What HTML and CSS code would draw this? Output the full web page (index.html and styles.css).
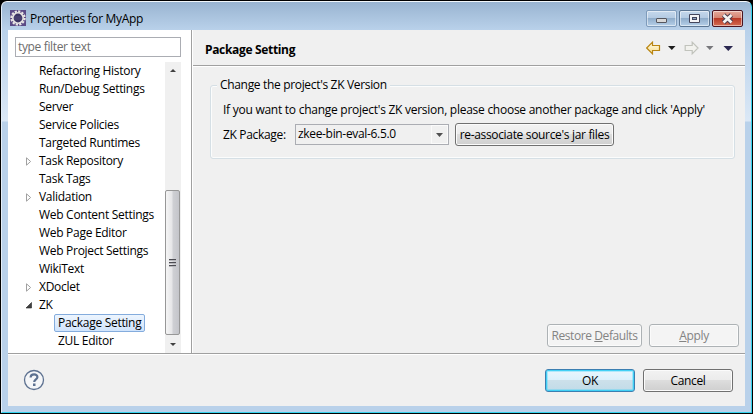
FILE: index.html
```html
<!DOCTYPE html>
<html lang="en">
<head>
<meta charset="utf-8">
<title>Properties for MyApp</title>
<link rel="stylesheet" href="styles.css">
</head>
<body>
<div class="window">
  <header class="titlebar">
    <svg class="app-icon" width="16" height="16" viewBox="0 0 16 16">
      <rect width="16" height="16" fill="#5b4a86"/>
      <circle cx="8" cy="8" r="6.6" fill="none" stroke="#e9e6e4" stroke-width="2.2" stroke-dasharray="2.2 1.25"/>
      <circle cx="8" cy="8" r="5.2" fill="#3b3262" stroke="#e9e6e4" stroke-width="1.6"/>
      <path d="M4 7h8M4 9h8" stroke="#5b5484" stroke-width=".8"/>
    </svg>
    <h1 class="window-title">Properties for MyApp</h1>
    <div class="controls">
      <span class="control control-min"><svg width="31" height="17"><rect x="10.5" y="8.5" width="10" height="4" rx=".5" fill="#d8d8d8" stroke="#55565e"/></svg></span>
      <span class="control control-max"><svg width="31" height="17"><path d="M10.500 4.500h10v8h-10z" fill="#f4f4f6" stroke="#44465c"/><rect x="13.500" y="7.500" width="4" height="2" fill="#8fa6c4" stroke="#44465c"/></svg></span>
      <span class="control control-close"><svg width="31" height="17"><path d="M11.500 5l8 7.500M19.500 5l-8 7.500" stroke="#4b3b4c" stroke-width="4.600"/><path d="M11.500 5l8 7.500M19.500 5l-8 7.500" stroke="#f5f3f3" stroke-width="2.700"/></svg></span>
    </div>
  </header>
  <div class="client">
    <div class="panes">
      <nav class="sidebar">
        <div class="filter">type filter text</div>
        <div class="tree-area">
          <ul class="tree">
            <li><span>Refactoring History</span></li>
            <li><span>Run/Debug Settings</span></li>
            <li><span>Server</span></li>
            <li><span>Service Policies</span></li>
            <li><span>Targeted Runtimes</span></li>
            <li class="closed"><svg width="6" height="9"><path d="M.5 .8v7.400L4.600 4.500z" fill="#fff" stroke="#a0a0a0"/></svg><span>Task Repository</span></li>
            <li><span>Task Tags</span></li>
            <li class="closed"><svg width="6" height="9"><path d="M.5 .8v7.400L4.600 4.500z" fill="#fff" stroke="#a0a0a0"/></svg><span>Validation</span></li>
            <li><span>Web Content Settings</span></li>
            <li><span>Web Page Editor</span></li>
            <li><span>Web Project Settings</span></li>
            <li><span>WikiText</span></li>
            <li class="closed"><svg width="6" height="9"><path d="M.5 .8v7.400L4.600 4.500z" fill="#fff" stroke="#a0a0a0"/></svg><span>XDoclet</span></li>
            <li class="closed"><svg width="6" height="9"><path d="M5.500 1.500v5.500H0z" fill="#404040" stroke="#262626" stroke-width=".6"/></svg><span>ZK</span></li>
            <li class="child"><span class="selected">Package Setting</span></li>
            <li class="child"><span>ZUL Editor</span></li>
          </ul>
          <div class="scrollbar">
            <svg class="arrow" width="6" height="3"><path d="M0 3l3-3 3 3z" fill="#404040"/></svg>
            <div class="thumb"><i></i><i></i><i></i></div>
            <svg class="arrow" width="6" height="3"><path d="M0 0h6l-3 3z" fill="#404040"/></svg>
          </div>
        </div>
      </nav>
      <main class="page">
        <div class="page-head">
          <h2>Package Setting</h2>
          <div class="nav-icons">
            <svg width="90" height="14" viewBox="0 0 90 14">
              <defs><linearGradient id="gold" x1="0" y1="0" x2="0" y2="1"><stop offset="0" stop-color="#fffdf0"/><stop offset="1" stop-color="#f8dc86"/></linearGradient></defs>
              <path d="M.7 7L6.500 1.200v3.300h7v5h-7v3.300z" fill="url(#gold)" stroke="#b98512" stroke-width="1.200"/>
              <path d="M22 5h7.500l-3.700 4z" fill="#1c1c1c"/>
              <path d="M52 7L46.200 1.200v3.300h-7v5h7v3.300z" fill="#f2f2ee" stroke="#c1c3bc" stroke-width="1.200"/>
              <path d="M60 5h7.500l-3.700 4z" fill="#77777b"/>
              <path d="M77.500 5h9.500l-4.700 5z" fill="#2b2850"/>
            </svg>
          </div>
        </div>
        <fieldset class="group">
          <legend>Change the project's ZK Version</legend>
          <p class="hint">If you want to change project's ZK version, please choose another package and click 'Apply'</p>
          <div class="field-row">
            <span class="label">ZK Package:</span>
            <div class="combo"><span>zkee-bin-eval-6.5.0</span><b><svg width="7" height="4"><path d="M0 0h7L3.500 4z" fill="#505050"/></svg></b></div>
            <button class="btn wide"><span>re-associate source's jar files</span></button>
          </div>
        </fieldset>
        <div class="page-actions">
          <button class="btn off restore"><span>Restore <u>D</u>efaults</span></button>
          <button class="btn off"><span><u>A</u>pply</span></button>
        </div>
      </main>
    </div>
    <footer class="footer">
      <svg class="help" width="22" height="22" viewBox="0 0 22 22">
        <circle cx="11" cy="11" r="9.500" fill="#f5f6f8" stroke="#5d7190" stroke-width="1.300"/>
        <path d="M7.600 8.500C7.700 4.300 14.600 4.400 14.400 8.200C14.300 10.300 11.200 10.400 11.200 13" fill="none" stroke="#5d7190" stroke-width="2.200"/>
        <rect x="10" y="14.500" width="2.500" height="2.500" fill="#5d7190"/>
      </svg>
      <div class="footer-actions">
        <button class="btn primary"><span>OK</span></button>
        <button class="btn"><span>Cancel</span></button>
      </div>
    </footer>
  </div>
</div>
</body>
</html>
```
FILE: styles.css
```css
* { box-sizing: border-box; }
body {
  margin: 0;
  width: 753px;
  height: 414px;
  overflow: hidden;
  background: #000;
  font: 12px/18px "Open Sans", "Noto Sans", sans-serif;
  letter-spacing: -0.33px;
  color: #000;
}
h1, h2, p, ul { margin: 0; padding: 0; font-size: inherit; }
svg { display: block; flex: none; }
.window {
  width: 751px;
  height: 412px;
  margin: 1px 0 0 1px;
  padding: 0 6px 6px;
  border: 1px solid #35d3ee;
  border-top-color: #f2f7fb;
  border-left-color: #e4eef8;
  border-right-color: #35d3ee;
  border-radius: 6px 6px 0 0;
  background: linear-gradient(#99b4d1 0, #b9d1ea 28px, #cfe0f2 90px, #dbe8f6 119px, #b9d1ea 120px);
}
.titlebar {
  display: flex;
  height: 28px;
  padding-left: 2px;
}
.app-icon { margin-top: 8px; }
.window-title {
  flex: 1;
  margin: 8px 0 0 4px;
  font-weight: 400;
  white-space: nowrap;
}
.controls { display: flex; gap: 2px; padding: 8px 2px 0 0; }
.control {
  width: 31px;
  height: 17px;
  border: 1px solid #5b7592;
  border-radius: 2px;
  background: linear-gradient(#c5d8ec 0, #b3cae2 48%, #90adcb 50%, #b6d0e9 100%);
  box-shadow: inset 0 0 0 1px rgba(255,255,255,.5);
}
.control svg { margin: -1px; }
.control-min { border-color: #7e9bbb; }
.control-close {
  border-color: #4b1420;
  background: linear-gradient(#e5aa9c 0, #d58270 48%, #b93a27 50%, #d46c52 100%);
}
.client { height: 376px; background: #f0f0f0; }
.panes { display: flex; height: 324px; border-bottom: 1px solid #a0a0a0; }
.sidebar {
  width: 184px;
  padding: 7px 0 0 7px;
  border-right: 1px solid #a0a0a0;
  background: #fff;
}
.filter {
  width: 166px;
  height: 20px;
  padding-left: 2px;
  border: 1px solid #abadb3;
  color: #6d6d6d;
  letter-spacing: -0.35px;
}
.tree-area { display: flex; width: 166px; margin-top: 5px; }
.tree { width: 150px; height: 291px; list-style: none; letter-spacing: -0.29px; }
.tree li {
  display: flex;
  align-items: center;
  height: 18px;
  padding-left: 24px;
  white-space: nowrap;
}
.tree .closed { padding-left: 11px; gap: 7px; }
.tree .child { padding-left: 39px; }
.tree .child span { padding: 0 4px; }
.tree .child .selected {
  height: 18px;
  padding: 0 3px;
  border: 1px solid #84acdd;
  border-radius: 2px;
  background: linear-gradient(#edf5fe, #d0e4fc);
  line-height: 16px;
}
.scrollbar {
  display: flex;
  flex-direction: column;
  align-items: center;
  justify-content: space-between;
  width: 16px;
  height: 291px;
  padding: 7px 0 7px;
  background: #f0f0f0;
}
.thumb {
  display: flex;
  flex-direction: column;
  align-self: flex-start;
  align-items: center;
  justify-content: center;
  gap: 1px;
  width: 15px;
  height: 145px;
  margin: 110px 0 0;
  border: 1px solid #979797;
  border-radius: 2px;
  background: linear-gradient(90deg, #f5f5f5, #e5e5e7 48%, #cfd0d4 52%, #c4c5ca);
}
.thumb i { width: 7px; height: 2px; background: #4c4c52; border-bottom: 1px solid #b8b8bc; }
.page { flex: 1; display: flex; flex-direction: column; border-left: 1px solid #fff; }
.page-head {
  display: flex;
  justify-content: space-between;
  height: 36px;
  padding: 10px 9px 0 12px;
  border-bottom: 1px solid #a0a0a0;
  box-shadow: 0 1px #fff;
}
.page-head h2 { font-weight: 700; line-height: 20px; }
.nav-icons { padding-top: 1px; }
.group {
  width: 525px;
  height: 83px;
  margin: 10px 0 0 17px;
  padding: 7px 0 0 12px;
  border: 1px solid #d5dfe5;
  border-radius: 3px;
  box-shadow: inset 0 0 0 1px #fbfcfc;
  white-space: nowrap;
}
.group legend { margin-left: -6px; padding: 0 3px; background: #f0f0f0; }
.hint { letter-spacing: -0.26px; }
.field-row { display: flex; height: 24px; margin-top: 4px; }
.label { width: 72px; padding-top: 3px; }
.combo {
  display: flex;
  justify-content: space-between;
  width: 154px;
  height: 21px;
  margin: 1px 6px 0 0;
  padding-left: 2px;
  border: 1px solid #abadb3;
}
.combo b {
  display: flex;
  align-items: center;
  justify-content: center;
  width: 17px;
  height: 19px;
  border: 1px solid #fafafa;
  background: #f0f0f0;
}
.btn {
  display: flex;
  align-items: center;
  justify-content: center;
  width: 90px;
  height: 23px;
  padding: 0;
  border: 1px solid #707070;
  border-radius: 3px;
  background: linear-gradient(#f2f2f2 0, #ebebeb 50%, #dddddd 50%, #cfcfcf 100%);
  box-shadow: inset 0 0 0 1px #fbfbfb;
  color: inherit;
  font: inherit;
  letter-spacing: inherit;
  white-space: nowrap;
}
.wide { width: 159px; }
.off { border-color: #adb2b5; background: #f4f4f4; color: #838383; }
.restore { width: 95px; letter-spacing: -0.42px; }
.primary {
  border-color: #3c7fb1;
  background: linear-gradient(#eaf6fd 0, #d9f0fc 50%, #cce0ea 50%, #c1dbe8 100%);
  box-shadow: inset 0 0 0 1px #41d0f5, inset 0 0 0 2px rgba(65,208,245,.35);
}
.page-actions { display: flex; justify-content: flex-end; gap: 7px; margin: auto 6px 6px 0; }
.footer {
  display: flex;
  justify-content: space-between;
  height: 52px;
  padding: 14px 12px 0 15px;
  border-top: 1px solid #fff;
}
.footer-actions { display: flex; gap: 8px; }
```
